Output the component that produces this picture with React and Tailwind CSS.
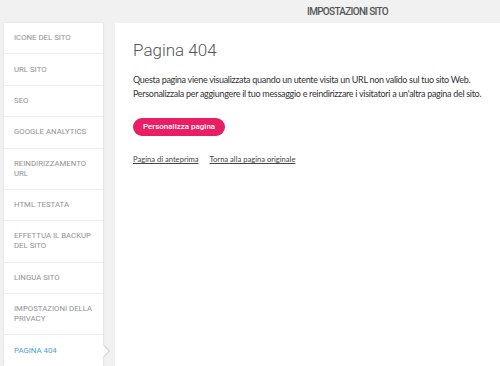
const items = [
  "ICONE DEL SITO",
  "URL SITO",
  "SEO",
  "GOOGLE ANALYTICS",
  "REINDIRIZZAMENTO URL",
  "HTML TESTATA",
  "EFFETTUA IL BACKUP DEL SITO",
  "LINGUA SITO",
  "IMPOSTAZIONI DELLA PRIVACY",
  "PAGINA 404",
];

const SideItem = ({ label, active }) => (
  <div
    className={`relative flex items-center min-h-[31.2px] py-[10.2px] pl-[10px] pr-[4px] text-[7.8px] leading-[10px] border-b border-[#efefef] ${
      active ? "text-[#4aa6d3]" : "text-[#929292]"
    }`}
  >
    <span className="max-w-[84px]">{label}</span>
    {active && (
      <span className="absolute right-[-4px] top-1/2 -translate-y-1/2 w-[8px] h-[8px] bg-white rotate-45 shadow-[1px_-1px_1px_rgba(0,0,0,0.15)]" />
    )}
  </div>
);

export default function App() {
  return (
    <div
      className="w-[500px] h-[366px] overflow-hidden bg-[#f1f1f1] flex flex-col"
      style={{ fontFamily: "Roboto, 'Noto Sans', sans-serif" }}
    >
      <div className="h-[23px] shrink-0 flex items-center pl-[307px] text-[10px] font-medium text-[#555] tracking-[-0.7px]">
        IMPOSTAZIONI SITO
      </div>
      <div className="flex flex-1 min-h-0">
        <div className="ml-[4px] w-[99px] bg-white shadow-[0_0_2px_rgba(0,0,0,0.12)] self-stretch">
          {items.map((it, i) => (
            <SideItem key={it} label={it} active={i === items.length - 1} />
          ))}
        </div>
        <div
          className="ml-[12px] flex-1 bg-white pl-[18px] pt-[15px]"
          style={{ fontFamily: "Lato, 'Open Sans', sans-serif" }}
        >
          <h1
            className="text-[17px] font-light text-[#555] leading-[24px]"
            style={{ fontFamily: "Roboto, 'Noto Sans', sans-serif" }}
          >
            Pagina 404
          </h1>
          <p className="mt-[11px] text-[9px] leading-[14px] text-[#333] tracking-[-0.3px] whitespace-nowrap">
            Questa pagina viene visualizzata quando un utente visita un URL non valido sul tuo sito Web.
            <br />
            Personalizzala per aggiungere il tuo messaggio e reindirizzare i visitatori a un'altra pagina del sito.
          </p>
          <button
            className="mt-[17px] h-[18px] px-[10px] rounded-full bg-[#e91e63] text-white text-[8px] font-medium leading-[18px]"
            style={{ fontFamily: "Roboto, 'Noto Sans', sans-serif" }}
          >
            Personalizza pagina
          </button>
          <div className="mt-[18px] flex gap-[11px] text-[7.6px] leading-[10px] text-[#444] underline">
            <span>Pagina di anteprima</span>
            <span>Torna alla pagina originale</span>
          </div>
        </div>
      </div>
    </div>
  );
}
